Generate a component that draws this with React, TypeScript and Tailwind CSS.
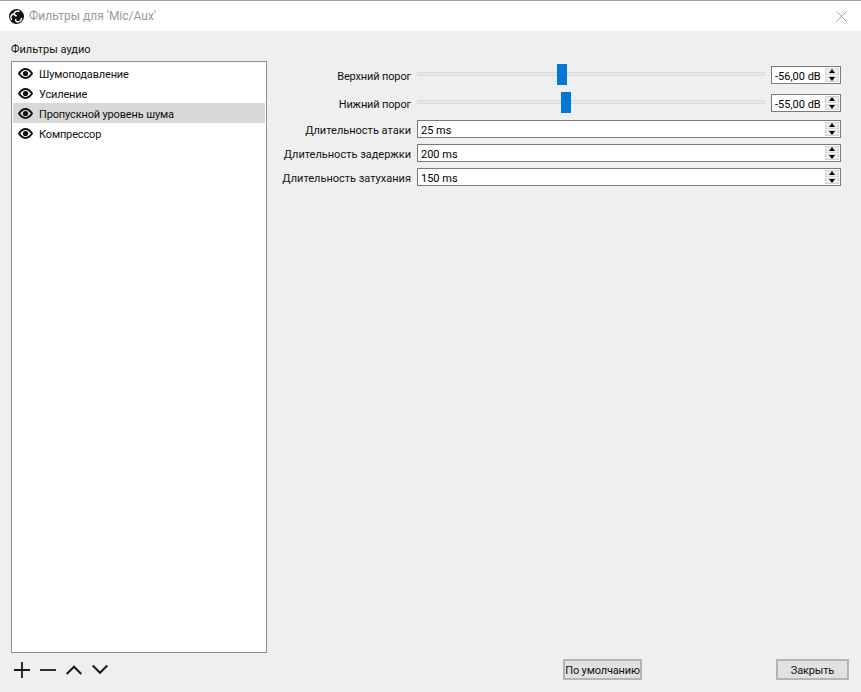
import type { ReactNode } from "react";

const filters = ["Шумоподавление", "Усиление", "Пропускной уровень шума", "Компрессор"];

function ObsLogo() {
  return (
    <svg width="15" height="15" viewBox="0 0 30 30">
      <circle cx="15" cy="15" r="15" fill="#111" />
      <g fill="none" stroke="#fff" strokeWidth="2.800" strokeLinecap="round">
        <path d="M20 4.500c-4-1.500-9 .5-9.500 4.500-.3 3 2 4.500 4 4.500" />
        <path d="M5 21c-2.500-3.500-1.500-9 2.500-10.500 2.500-1 4.500.5 5.500 2.500" />
        <path d="M25 19c0 4-4 7.500-8 7-3-.5-4-2.500-3.500-5" />
      </g>
    </svg>
  );
}

function Eye() {
  return (
    <svg width="15" height="11" viewBox="0 0 15 11" className="mr-px shrink-0">
      <path d="M1 5.500C3 2.500 5 1.100 7.500 1.100S12 2.500 14 5.500C12 8.500 10 9.900 7.500 9.900S3 8.500 1 5.500Z" fill="none" stroke="#111" strokeWidth="2" />
      <circle cx="7.500" cy="5.500" r="2.600" fill="#111" />
    </svg>
  );
}

function SpinButtons() {
  return (
    <div className="flex h-full w-[14px] shrink-0 flex-col items-stretch gap-px py-px">
      <div className="flex flex-1 items-center justify-center border border-[#d4d4d4] bg-[#ececec]">
        <div className="h-0 w-0 border-x-[3.500px] border-b-[4px] border-x-transparent border-b-black" />
      </div>
      <div className="flex flex-1 items-center justify-center border border-[#d4d4d4] bg-[#ececec]">
        <div className="h-0 w-0 border-x-[3.500px] border-t-[4px] border-x-transparent border-t-black" />
      </div>
    </div>
  );
}

function SpinBox({ value, className }: { value: string; className: string }) {
  return (
    <div className={`flex h-[18px] items-center border border-[#7a7a7a] bg-white pl-[3px] pr-px text-black ${className}`}>
      <span className="flex-1 whitespace-nowrap pt-[2px] leading-none">{value}</span>
      <SpinButtons />
    </div>
  );
}

function Row({ label, className, children }: { label: string; className: string; children: ReactNode }) {
  return (
    <div className={`flex items-start ${className}`}>
      <div className="w-[137px] shrink-0 whitespace-nowrap pr-[6px] pt-[2px] text-right leading-[18px]">{label}</div>
      {children}
    </div>
  );
}

function SliderRow({ label, value, offset, className }: { label: string; value: string; offset: string; className: string }) {
  return (
    <div className={`flex h-[21px] items-start ${className}`}>
      <div className="mt-[2px] w-[137px] shrink-0 whitespace-nowrap pr-[6px] pt-[2px] text-right leading-[18px] tracking-[-0.15px]">{label}</div>
      <div className="relative h-[21px] w-[348px] shrink-0">
        <div className="mt-[8px] h-[4px] border border-[#dcdcdc] bg-[#e6e6e6]" />
        <div className={`absolute top-0 h-[21px] w-[10px] bg-[#0078d7] ${offset}`} />
      </div>
      <SpinBox value={value} className="ml-[6px] mt-[2px] w-[70px]" />
    </div>
  );
}

export default function App() {
  return (
    <div className="flex h-[692px] w-[861px] flex-col overflow-hidden bg-[#efefef] text-[11px] text-[#111] [font-family:Roboto,sans-serif]">
      <header className="flex h-[31px] shrink-0 items-center border-t border-[#a0a0a0] bg-white pl-[9px] pr-[14px]">
        <ObsLogo />
        <span className="ml-[5px] flex-1 text-[12px] text-[#999]">Фильтры для 'Mic/Aux'</span>
        <svg width="11" height="11" viewBox="0 0 11 11">
          <path d="M.5.5l10 10M10.500.5l-10 10" stroke="#8a8a8a" strokeWidth="0.800" />
        </svg>
      </header>

      <div className="flex min-h-0 flex-1 pl-[11px]">
        <aside className="flex w-[256px] shrink-0 flex-col">
          <div className="h-[30px] pt-[11px] leading-[16px]">Фильтры аудио</div>
          <ul className="h-[592px] border border-[#8b8b9b] bg-white p-px tracking-[-0.15px]">
            {filters.map((name, i) => (
              <li key={name} className={`flex h-[20px] items-center gap-[4px] pl-[5px] ${i === 2 ? "bg-[#d8d8d8]" : ""}`}>
                <Eye />
                <span className="ml-px pt-[4px]">{name}</span>
              </li>
            ))}
          </ul>
          <div className="mt-[9px] flex items-center gap-[10px] pl-[3px] text-[#1a1a1a]">
            <svg width="16" height="16" viewBox="0 0 16 16"><path d="M8 0v16M0 8h16" stroke="currentColor" strokeWidth="1.800" /></svg>
            <svg width="16" height="16" viewBox="0 0 16 16"><path d="M0 8h16" stroke="currentColor" strokeWidth="1.800" /></svg>
            <svg width="16" height="16" viewBox="0 0 16 16"><path d="M.7 12 8 4.700 15.300 12" fill="none" stroke="currentColor" strokeWidth="2" /></svg>
            <svg width="16" height="16" viewBox="0 0 16 16"><path d="M.7 3.500 8 10.800 15.300 3.500" fill="none" stroke="currentColor" strokeWidth="2" /></svg>
          </div>
        </aside>

        <main className="flex min-w-0 flex-1 flex-col pl-[13px]">
          <div className="h-[33px] shrink-0" />
          <SliderRow label="Верхний порог" value="-56,00 dB" offset="left-[140px]" className="" />
          <SliderRow label="Нижний порог" value="-55,00 dB" offset="left-[144px]" className="mt-[7px]" />
          <Row label="Длительность атаки" className="mt-[7px] h-[18px]">
            <SpinBox value="25 ms" className="w-[424px]" />
          </Row>
          <Row label="Длительность задержки" className="mt-[6px] h-[18px]">
            <SpinBox value="200 ms" className="w-[424px]" />
          </Row>
          <Row label="Длительность затухания" className="mt-[6px] h-[18px]">
            <SpinBox value="150 ms" className="w-[424px]" />
          </Row>
          <div className="flex-1" />
          <div className="mb-[12px] flex h-[21px] items-stretch pl-[283px] pr-[12px] tracking-[-0.15px]">
            <button className="w-[79px] whitespace-nowrap border-2 border-[#b4b4b4] bg-[#e1e1e1] pt-px leading-none text-[#111]">По умолчанию</button>
            <div className="flex-1" />
            <button className="w-[73px] whitespace-nowrap border-2 border-[#b4b4b4] bg-[#e1e1e1] pt-px leading-none text-[#111]">Закрыть</button>
          </div>
        </main>
      </div>
    </div>
  );
}
